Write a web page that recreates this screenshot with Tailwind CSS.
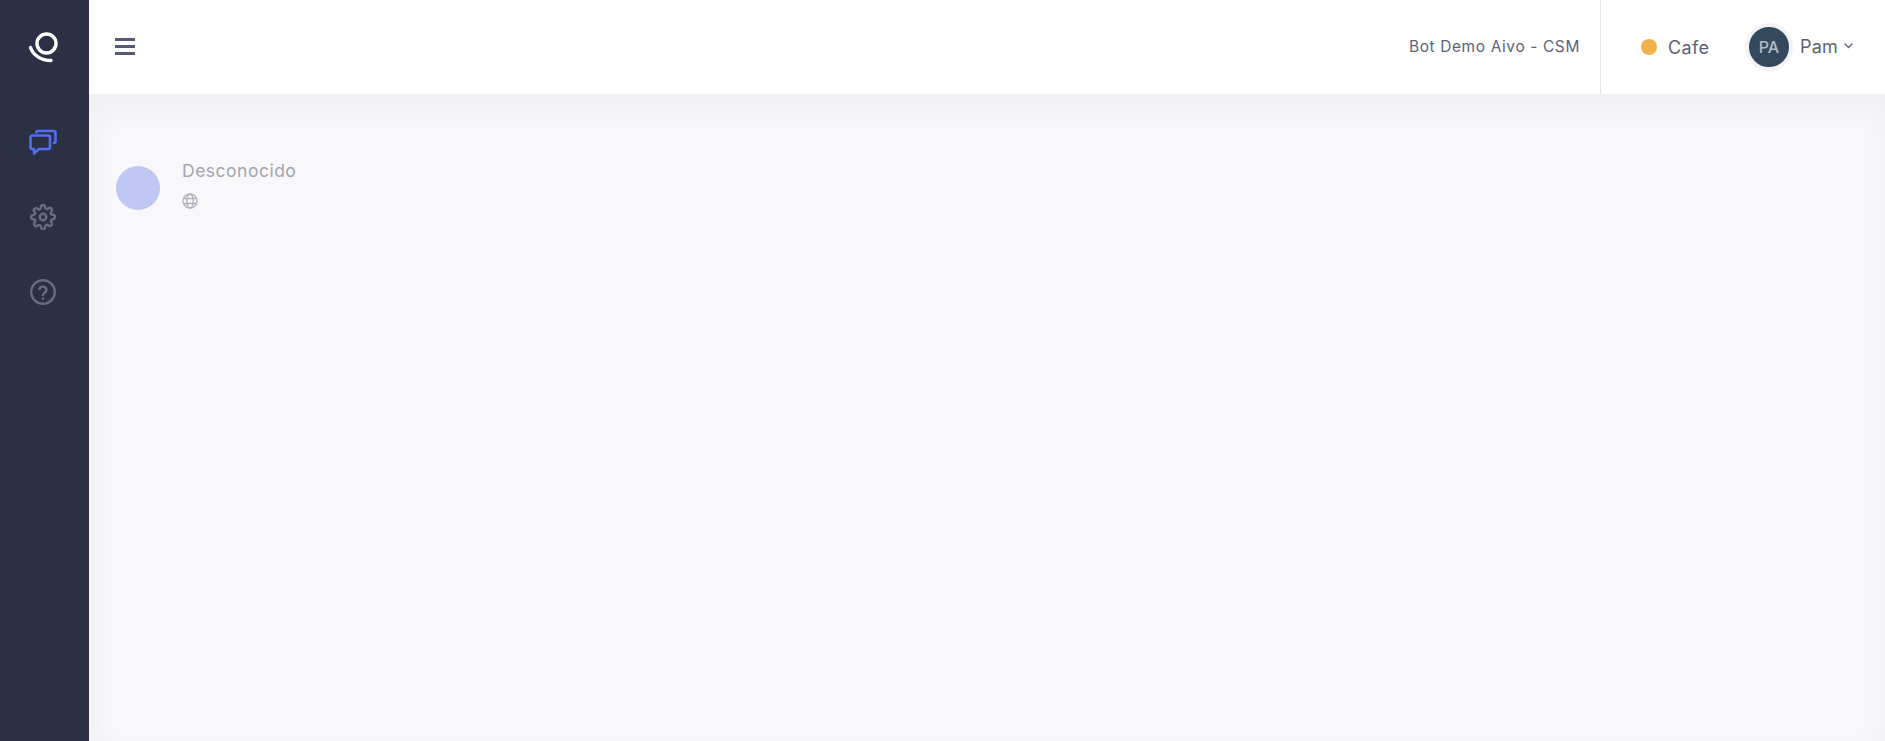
<!DOCTYPE html>
<html lang="en">
<head>
    <meta charset="UTF-8">
    <title>Aivo Agent</title>
    <script src="https://cdn.jsdelivr.net/npm/@tailwindcss/browser@4"></script>
</head>
<body class="h-screen overflow-hidden bg-[#f8f8fb] font-['Inter',sans-serif]">
    <div class="flex h-[741px]">
        <!-- sidebar -->
        <aside class="w-[89px] shrink-0 bg-[#2b3044] flex flex-col items-center pr-[3px]">
            <div class="h-[94px] flex items-center justify-center">
                <svg class="w-[30px] h-[31px] mt-[1px]" viewBox="0 0 30 31" fill="none" stroke="#fff" stroke-width="3.4" stroke-linecap="round">
                    <circle cx="18.5" cy="11.5" r="9.5"/>
                    <path d="M2.5 15.5 C5 23 13 28.5 23 28.5"/>
                </svg>
            </div>
            <nav class="flex flex-col items-center gap-[49px] mt-[35px]">
                <svg class="w-[28px] h-[26px]" viewBox="0 0 28 26" fill="none" stroke="#4f6ef0" stroke-width="2.6" stroke-linejoin="round" stroke-linecap="round">
                    <path d="M3.5 6.5 H19.5 A1.5 1.5 0 0 1 21 8 V18.5 A1.5 1.5 0 0 1 19.5 20 H10 L5 24.5 V20 H3.5 A2 2 0 0 1 1.5 18 V8.5 A2 2 0 0 1 3.5 6.5 Z"/>
                    <path d="M7.5 3.5 A1.5 1.5 0 0 1 9 2 H25 A1.5 1.5 0 0 1 26.5 3.5 V12.5 A1.5 1.5 0 0 1 25 14"/>
                </svg>
                <svg class="w-[26px] h-[26px]" viewBox="0 0 24 24" fill="none" stroke="#666b7e" stroke-width="2.3" stroke-linecap="round" stroke-linejoin="round">
                    <circle cx="12" cy="12" r="3"/>
                    <path d="M19.4 15a1.65 1.65 0 0 0 .33 1.82l.06.06a2 2 0 1 1-2.83 2.83l-.06-.06a1.65 1.65 0 0 0-2.82 1.17V21a2 2 0 1 1-4 0v-.09a1.65 1.65 0 0 0-2.82-1.11l-.06.06a2 2 0 1 1-2.83-2.83l.06-.06a1.65 1.65 0 0 0-1.17-2.82H3a2 2 0 1 1 0-4h.09a1.65 1.65 0 0 0 1.11-2.82l-.06-.06a2 2 0 1 1 2.83-2.83l.06.06a1.65 1.65 0 0 0 1.82.33H9a1.65 1.65 0 0 0 1-1.51V3a2 2 0 1 1 4 0v.09a1.65 1.65 0 0 0 2.82 1.11l.06-.06a2 2 0 1 1 2.83 2.83l-.06.06a1.65 1.65 0 0 0-.33 1.82V9a1.65 1.65 0 0 0 1.51 1H21a2 2 0 1 1 0 4h-.09a1.65 1.65 0 0 0-1.51 1z"/>
                </svg>
                <svg class="w-[26px] h-[26px]" viewBox="0 0 26 26" fill="none" stroke="#666b7e" stroke-width="2.4" stroke-linecap="round" stroke-linejoin="round">
                    <circle cx="13" cy="13" r="11.8"/>
                    <path d="M9.5 10a3.6 3.6 0 0 1 7 1c0 2.4-3.5 3-3.5 5"/>
                    <path d="M13 19.6v.1"/>
                </svg>
            </nav>
        </aside>

        <div class="flex-1 flex flex-col min-w-0">
            <!-- top bar -->
            <header class="h-[94px] shrink-0 bg-white flex items-center">
                <button type="button" class="ml-[26px] mb-[2px] flex flex-col gap-[4px] w-[20px]">
                    <span class="block h-[3px] bg-[#555a72]"></span>
                    <span class="block h-[3px] bg-[#555a72]"></span>
                    <span class="block h-[3px] bg-[#555a72]"></span>
                </button>
                <span class="ml-auto text-[15.5px] tracking-[0.6px] text-[#5d6277]">Bot Demo Aivo - CSM</span>
                <div class="ml-[20px] h-full border-l border-[#e6e6ea] flex items-center pl-[40px] pr-[32px]">
                    <span class="w-[16px] h-[16px] rounded-full bg-[#f2b04a]"></span>
                    <span class="ml-[11px] mt-[1px] w-[41px] whitespace-nowrap text-[18px] tracking-[0.4px] text-[#5d6277]">Cafe</span>
                    <span class="ml-[36px] w-[48px] h-[48px] rounded-full border-4 border-[#f3f3f5] bg-[#34495e] text-[#b4bcc6] text-[16px] font-medium flex items-center justify-center box-border">PA</span>
                    <span class="ml-[7px] mb-[1px] w-[38px] whitespace-nowrap text-[18px] tracking-[0.2px] text-[#5d6277]">Pam</span>
                    <svg class="ml-[6px] mb-[3px] w-[9px] h-[6px]" viewBox="0 0 9 6" fill="none" stroke="#5d6277" stroke-width="1.4" stroke-linecap="round" stroke-linejoin="round">
                        <path d="M1 1 L4.5 4.5 L8 1"/>
                    </svg>
                </div>
            </header>

            <!-- content -->
            <main class="flex-1 bg-[#f8f8fb] shadow-[inset_3px_14px_30px_rgba(40,40,80,0.045)]">
                <div class="flex items-start gap-[22px] pl-[27px] pt-[72px]">
                    <div class="w-[44px] h-[44px] rounded-full bg-[#bfc8f5]"></div>
                    <div class="mt-[-7px]">
                        <p class="text-[17.5px] tracking-[0.5px] leading-[24px] text-[#a4a5ad]">Desconocido</p>
                        <svg class="mt-[10px] w-[16px] h-[16px]" viewBox="0 0 16 16" fill="none" stroke="#b0b1bb" stroke-width="1.3">
                            <circle cx="8" cy="8" r="7"/>
                            <ellipse cx="8" cy="8" rx="3.2" ry="7"/>
                            <path d="M1.5 5.5 H14.5 M1.5 10.5 H14.5"/>
                        </svg>
                    </div>
                </div>
            </main>
        </div>
    </div>
</body>
</html>
